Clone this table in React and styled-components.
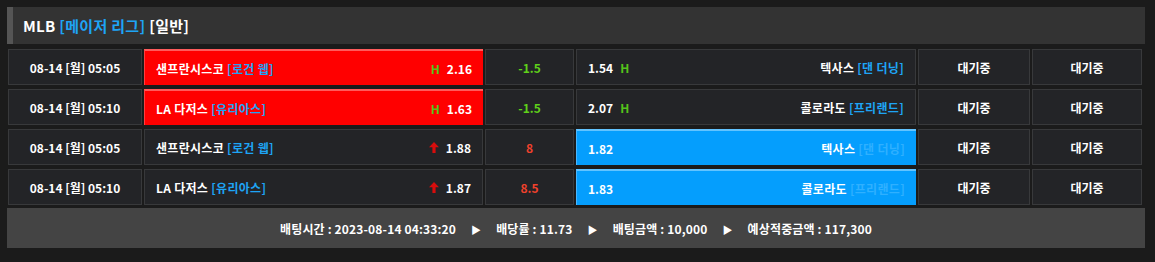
import React from 'react';
import styled, { createGlobalStyle, css } from 'styled-components';

const GlobalStyle = createGlobalStyle`
  html, body {
    margin: 0;
    padding: 0;
    background: #1b1b1b;
  }
  body {
    font-family: "Noto Sans CJK KR", "Noto Sans", sans-serif;
    color: #fff;
  }
`;

const Page = styled.div`
  padding: 7px 0 0 7px;
  width: 1138px;
`;

const Title = styled.div`
  height: 37px;
  background: #333;
  border-left: 6px solid #555;
  display: flex;
  align-items: center;
  padding-left: 10px;
  font-size: 15px;
  font-weight: 700;
  letter-spacing: 0.3px;
  box-sizing: border-box;
`;

const Blue = styled.span`
  color: ${props => props.muted ? '#2fb0ff' : '#1ea4f5'};
  font-weight: 700;
`;

const Board = styled.div`
  display: flex;
  flex-direction: column;
  gap: 4px;
  margin: 5px 0 0 1px;
`;

const Row = styled.div`
  display: grid;
  grid-template-columns: 134px 339px 89px 340px 112px 110px;
  column-gap: 2px;
  height: 36px;
`;

const Cell = styled.div`
  ${props => css`
    box-sizing: border-box;
    display: flex;
    align-items: center;
    justify-content: ${props.align || 'center'};
    padding: 0 11px;
    font-size: 12px;
    font-weight: 700;
    background: #232427;
    border: 1px solid #38393b;
    color: #fff;

    ${props.pick === 'red' && css`
      background: #ff0000;
      border: none;
      border-top: 2px solid #ff5c5c;
      border-left: 1px solid #ff4040;
    `}

    ${props.pick === 'blue' && css`
      background: #059efd;
      border: none;
      border-top: 2px solid #62c3ff;
      border-left: 1px solid #4ab7ff;
    `}
  `}
`;

const Team = styled.span`
  flex: 1;
  text-align: ${props => props.right ? 'right' : 'left'};
  white-space: nowrap;
  letter-spacing: 0.3px;
`;

const Odds = styled.div`
  display: flex;
  align-items: center;
  gap: 7px;
`;

const Home = styled.span`
  color: #55c21b;
  font-weight: 700;
`;

const Line = styled.span`
  color: ${props => props.over ? '#f0412c' : '#5fd11a'};
  font-weight: 700;
`;

const Footer = styled.div`
  margin-top: 3px;
  height: 40px;
  background: #444;
  display: flex;
  align-items: center;
  justify-content: center;
  gap: 14px;
  font-size: 12px;
  font-weight: 700;
  letter-spacing: 0.15px;
`;

const Arrow = styled.span`
  font-size: 10px;
  color: #fff;
  margin: 2px 1px 0;
`;

const UpArrow = () => (
  <svg width="10" height="11" viewBox="0 0 10 11">
    <path d="M5 0 L10 5.2 L6.6 5.2 L6.6 11 L3.4 11 L3.4 5.2 L0 5.2 Z" fill="#d60d0d" />
  </svg>
);

const games = [
  { time: '08-14 [월] 05:05', home: '샌프란시스코', hp: '로건 웹', ho: '2.16', line: '-1.5', ao: '1.54', away: '텍사스', ap: '댄 더닝', pick: 'home', kind: 'hc' },
  { time: '08-14 [월] 05:10', home: 'LA 다저스', hp: '유리아스', ho: '1.63', line: '-1.5', ao: '2.07', away: '콜로라도', ap: '프리랜드', pick: 'home', kind: 'hc' },
  { time: '08-14 [월] 05:05', home: '샌프란시스코', hp: '로건 웹', ho: '1.88', line: '8', ao: '1.82', away: '텍사스', ap: '댄 더닝', pick: 'away', kind: 'ou' },
  { time: '08-14 [월] 05:10', home: 'LA 다저스', hp: '유리아스', ho: '1.87', line: '8.5', ao: '1.83', away: '콜로라도', ap: '프리랜드', pick: 'away', kind: 'ou' },
];

export default function App() {
  return (
    <>
      <GlobalStyle />
      <Page>
        <Title>
          MLB&nbsp;<Blue>[메이저 리그]</Blue>&nbsp;[일반]
        </Title>
        <Board>
          {games.map((g, i) => (
            <Row key={i}>
              <Cell>{g.time}</Cell>
              <Cell align="space-between" pick={g.pick === 'home' ? 'red' : null}>
                <Team>{g.home} <Blue>[{g.hp}]</Blue></Team>
                <Odds>
                  {g.kind === 'hc' ? <Home>H</Home> : <UpArrow />}
                  <span>{g.ho}</span>
                </Odds>
              </Cell>
              <Cell>
                <Line over={g.kind === 'ou'}>{g.line}</Line>
              </Cell>
              <Cell align="space-between" pick={g.pick === 'away' ? 'blue' : null}>
                <Odds>
                  <span>{g.ao}</span>
                  {g.kind === 'hc' && <Home>H</Home>}
                </Odds>
                <Team right>{g.away} <Blue muted={g.pick === 'away'}>[{g.ap}]</Blue></Team>
              </Cell>
              <Cell>대기중</Cell>
              <Cell>대기중</Cell>
            </Row>
          ))}
        </Board>
        <Footer>
          <span>배팅시간 : 2023-08-14 04:33:20</span>
          <Arrow>▶</Arrow>
          <span>배당률 : 11.73</span>
          <Arrow>▶</Arrow>
          <span>배팅금액 : 10,000</span>
          <Arrow>▶</Arrow>
          <span>예상적중금액 : 117,300</span>
        </Footer>
      </Page>
    </>
  );
}
